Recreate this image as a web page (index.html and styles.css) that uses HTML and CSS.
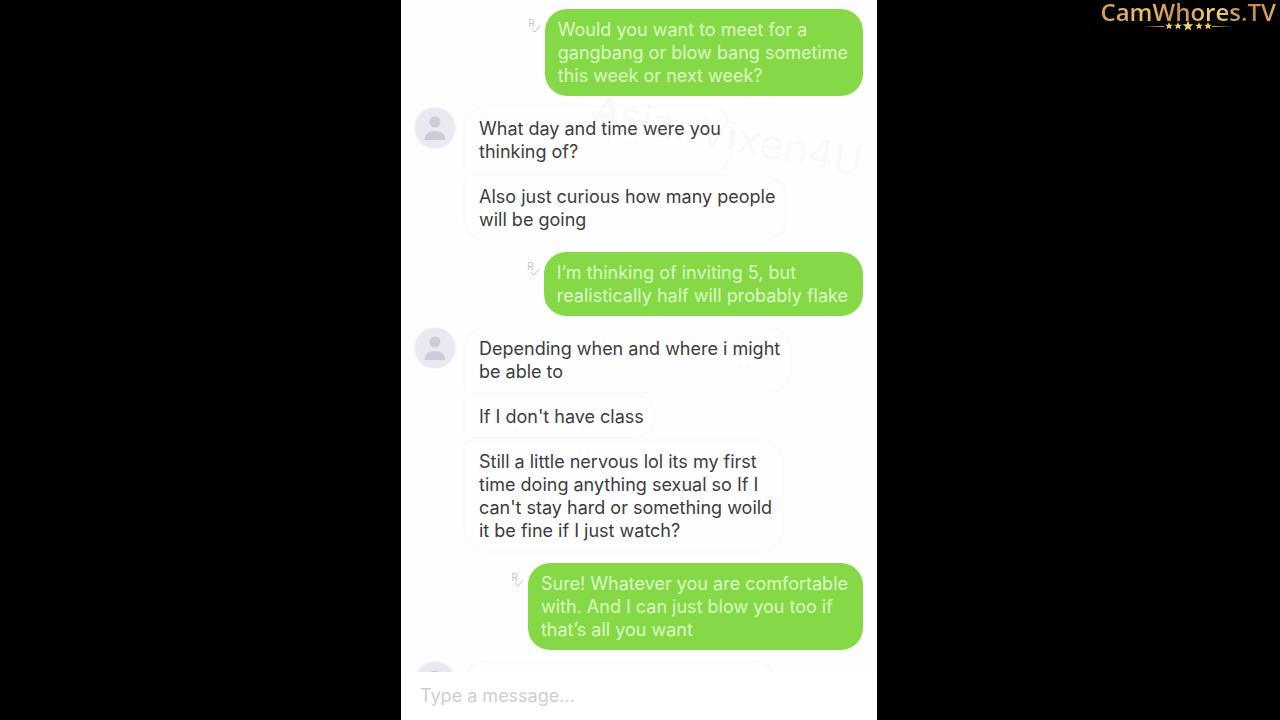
FILE: index.html
```html
<!DOCTYPE html>
<html lang="en">
<head>
    <meta charset="UTF-8">
    <meta name="viewport" content="width=device-width, initial-scale=1.0">
    <title>Chat</title>
    <link rel="stylesheet" href="styles.css">
</head>
<body>
    <!-- Shared icons -->
    <svg class="sprite" aria-hidden="true">
        <symbol id="person" viewBox="0 0 40 40">
            <circle cx="20" cy="14" r="5.5"/>
            <path d="M9.500 32C10 26 14 23 20 23S30 26 30.500 32Z"/>
        </symbol>
        <symbol id="check" viewBox="0 0 10 8">
            <path d="M1 4L4 7L9 1" fill="none" stroke="currentColor"/>
        </symbol>
    </svg>

    <div class="site-logo">
        <div class="site-name">CamWhores.TV</div>
        <svg class="site-stars" viewBox="0 0 92 12" aria-hidden="true">
            <defs>
                <linearGradient id="lineLeft"><stop offset="0" stop-color="#000"/><stop offset="1" stop-color="#d9ac55"/></linearGradient>
                <linearGradient id="lineRight"><stop offset="0" stop-color="#d9ac55"/><stop offset="1" stop-color="#000"/></linearGradient>
                <path id="star" d="M0-5L1.300-1.700L4.800-1.500L2.100.700L3 4.100L0 2.200L-3 4.100L-2.100.700L-4.800-1.500L-1.300-1.700Z"/>
            </defs>
            <rect x="0" y="6" width="22" height="1" fill="url(#lineLeft)"/>
            <rect x="70" y="6" width="22" height="1" fill="url(#lineRight)"/>
            <g fill="#f3cf74">
                <use href="#star" transform="translate(27 6) scale(.8)"/>
                <use href="#star" transform="translate(36 6) scale(.8)"/>
                <use href="#star" transform="translate(46 6) scale(1.100)"/>
                <use href="#star" transform="translate(57 6) scale(.8)"/>
                <use href="#star" transform="translate(66 6) scale(.8)"/>
            </g>
        </svg>
    </div>

    <main class="chat">
        <div class="messages">
            <div class="row sent">
                <span class="receipt">R<svg class="tick"><use href="#check"/></svg></span>
                <p class="bubble">Would you want to meet for a<br>gangbang or blow bang sometime<br>this week or next week?</p>
            </div>

            <div class="row">
                <svg class="avatar"><use href="#person"/></svg>
                <div class="group">
                    <p class="bubble">What day and time were you<br>thinking of?</p>
                    <p class="bubble">Also just curious how many people<br>will be going</p>
                </div>
            </div>

            <div class="row sent">
                <span class="receipt">R<svg class="tick"><use href="#check"/></svg></span>
                <p class="bubble">I’m thinking of inviting 5, but<br>realistically half will probably flake</p>
            </div>

            <div class="row">
                <svg class="avatar"><use href="#person"/></svg>
                <div class="group">
                    <p class="bubble">Depending when and where i might<br>be able to</p>
                    <p class="bubble">If I don't have class</p>
                    <p class="bubble">Still a little nervous lol its my first<br>time doing anything sexual so If I<br>can't stay hard or something woild<br>it be fine if I just watch?</p>
                </div>
            </div>

            <div class="row sent">
                <span class="receipt">R<svg class="tick"><use href="#check"/></svg></span>
                <p class="bubble">Sure! Whatever you are comfortable<br>with. And I can just blow you too if<br>that’s all you want</p>
            </div>

            <div class="row">
                <svg class="avatar"><use href="#person"/></svg>
                <div class="group">
                    <p class="bubble next"></p>
                </div>
            </div>
            <div class="watermark">AsianVixen4U</div>
        </div>

        <form class="composer">
            <input type="text" aria-label="Message" placeholder="Type a message...">
        </form>
    </main>
</body>
</html>
```

FILE: styles.css
```css
* {
    box-sizing: border-box;
}
body {
    margin: 0;
    padding-right: 2px;
    background-color: #000;
    font-family: Inter, Roboto, sans-serif;
    font-size: 18px;
    line-height: 23px;
}
.sprite {
    position: absolute;
    width: 0;
    height: 0;
}
.chat {
    display: flex;
    flex-direction: column;
    width: 100%;
    max-width: 476px;
    height: 100vh;
    margin: 0 auto;
    background-color: #fefefe;
    color: #3c3c40;
}
.messages {
    position: relative;
    flex: 1;
    min-height: 0;
    display: flex;
    flex-direction: column;
    gap: 12px;
    padding: 9px 14px 0;
    overflow: hidden;
}
.row {
    display: flex;
    flex-shrink: 0;
    gap: 10px;
}
.sent {
    justify-content: flex-end;
    gap: 4px;
}
.group {
    display: flex;
    flex-direction: column;
    align-items: flex-start;
    gap: 4px;
}
.bubble {
    margin: 0;
    padding: 9px 10px 9px 14px;
    background-color: #fefefe;
    border-radius: 6px 22px 22px 6px;
    box-shadow: 0 0 3px 1px #f8f8fa;
}
.group .bubble:first-child {
    border-top-left-radius: 22px;
}
.group .bubble:last-child {
    border-bottom-left-radius: 22px;
}
.sent .bubble {
    padding: 9px 15px 9px 13px;
    background-color: #85d946;
    border-radius: 22px;
    box-shadow: none;
    color: #dcfbc4;
}
/* Message that runs under the composer */
.bubble.next {
    width: 310px;
    height: 64px;
}
.avatar {
    width: 40px;
    height: 40px;
    border-radius: 50%;
    background-color: #e9e9f2;
    box-shadow: 0 0 3px #e9e9f2;
    fill: #cbccd7;
}
.receipt {
    display: flex;
    padding-top: 8px;
    color: #c2c2c8;
    font-size: 10px;
    line-height: 12px;
}
.tick {
    width: 10px;
    height: 8px;
    margin-top: 8px;
    margin-left: -4px;
}
.watermark {
    position: absolute;
    top: 112px;
    right: 12px;
    color: rgba(120, 120, 130, 0.05);
    font-family: "DejaVu Sans", sans-serif;
    font-size: 40px;
    line-height: 48px;
    transform: rotate(11deg);
    pointer-events: none;
}
.composer {
    padding: 12px 19px;
    height: 48px;
    background-color: #fff;
}
.composer input {
    display: block;
    width: 100%;
    height: 23px;
    padding: 0;
    border: 0;
    outline: 0;
    background: none;
    font: inherit;
}
.composer input::placeholder {
    color: #ceced4;
    opacity: 1;
}
/* Gold logo in the corner */
.site-logo {
    position: absolute;
    top: 0;
    right: 4px;
    display: flex;
    flex-direction: column;
    align-items: center;
}
.site-name {
    background: linear-gradient(100deg, #d99a55, #f0bd70 25%, #c98f50 45%, #f2dc7a 65%, #b88350 82%, #e0ac60);
    background-clip: text;
    -webkit-background-clip: text;
    color: transparent;
    font-family: "Open Sans", sans-serif;
    font-size: 24px;
    font-weight: 600;
    line-height: 24px;
}
.site-stars {
    width: 92px;
    height: 12px;
    margin-top: -4px;
}
```
